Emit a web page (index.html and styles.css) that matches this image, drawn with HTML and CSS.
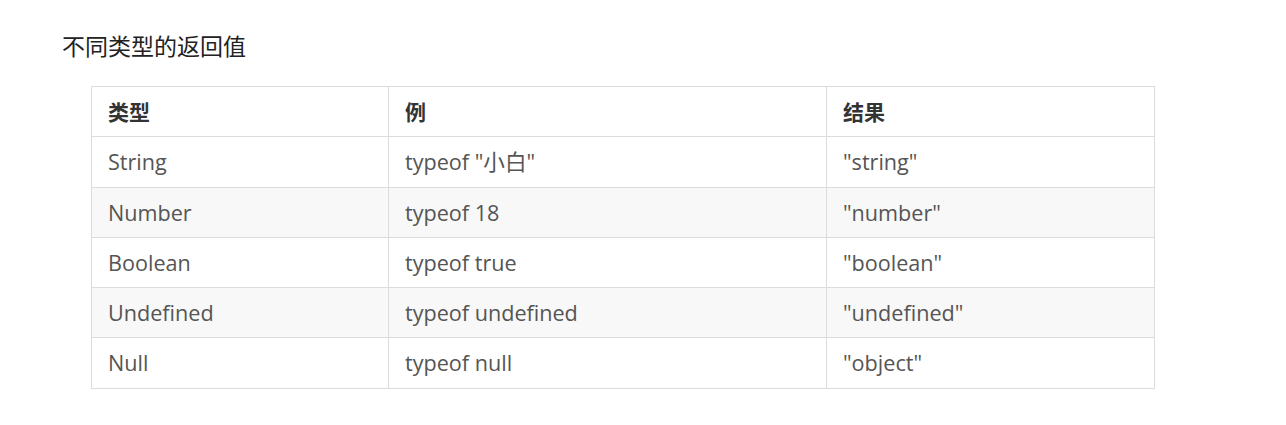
FILE: index.html
```html
<!DOCTYPE html>
<html lang="zh">
<head>
<meta charset="utf-8">
<title>不同类型的返回值</title>
<link rel="stylesheet" href="styles.css">
</head>
<body>
<div class="page">
  <h3 class="title">不同类型的返回值</h3>
  <table class="types">
    <colgroup>
      <col class="c1">
      <col class="c2">
      <col class="c3">
    </colgroup>
    <thead>
      <tr><th>类型</th><th>例</th><th>结果</th></tr>
    </thead>
    <tbody>
      <tr><td>String</td><td>typeof "小白"</td><td>"string"</td></tr>
      <tr><td>Number</td><td>typeof 18</td><td>"number"</td></tr>
      <tr><td>Boolean</td><td>typeof true</td><td>"boolean"</td></tr>
      <tr><td>Undefined</td><td>typeof undefined</td><td>"undefined"</td></tr>
      <tr><td>Null</td><td>typeof null</td><td>"object"</td></tr>
    </tbody>
  </table>
</div>
</body>
</html>
```
FILE: styles.css
```css
html, body {
  margin: 0;
  padding: 0;
  background: #ffffff;
}

.page {
  padding: 29px 0 0 62px;
  font-family: "Open Sans", "Noto Sans CJK SC", sans-serif;
}

.title {
  margin: 0;
  font-family: "Noto Sans CJK SC", sans-serif;
  font-size: 23px;
  font-weight: normal;
  line-height: 32px;
  color: #222;
}

.types {
  margin: 25px 0 0 29px;
  border-collapse: collapse;
  table-layout: fixed;
  width: 1063px;
  font-size: 21.6px;
  color: #555;
}

.types .c1 { width: 297px; }
.types .c2 { width: 438px; }
.types .c3 { width: 328px; }

.types th,
.types td {
  border: 1px solid #dcdcdc;
  padding: 10px 16px;
  line-height: 29.3px;
  text-align: left;
  white-space: nowrap;
}

.types th {
  font-family: "Noto Sans CJK SC", sans-serif;
  font-weight: bold;
  font-size: 21px;
  color: #333;
}

.types tbody tr:nth-child(even) td {
  background: #f8f8f8;
}
```
